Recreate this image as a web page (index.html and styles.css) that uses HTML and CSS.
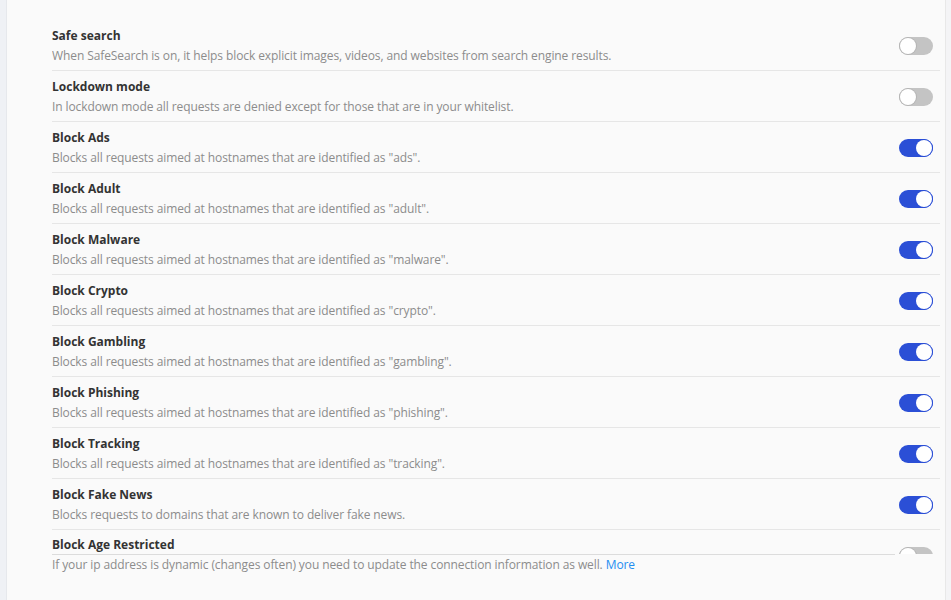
FILE: index.html
```html
<!DOCTYPE html>
<html lang="en">
<head>
    <meta charset="UTF-8">
    <meta name="viewport" content="width=device-width, initial-scale=1.0">
    <title>Filtering settings</title>
    <link rel="stylesheet" href="styles.css">
</head>
<body>
    <div class="page">
        <div class="side"></div>

        <div class="main">
            <div class="settings">
                <div class="setting">
                    <div class="text">
                        <div class="name">Safe search</div>
                        <div class="desc">When SafeSearch is on, it helps block explicit images, videos, and websites from search engine results.</div>
                    </div>
                    <label class="switch"><input type="checkbox"><span class="slider"></span></label>
                </div>

                <div class="setting">
                    <div class="text">
                        <div class="name">Lockdown mode</div>
                        <div class="desc">In lockdown mode all requests are denied except for those that are in your whitelist.</div>
                    </div>
                    <label class="switch"><input type="checkbox"><span class="slider"></span></label>
                </div>

                <div class="setting">
                    <div class="text">
                        <div class="name">Block Ads</div>
                        <div class="desc">Blocks all requests aimed at hostnames that are identified as "ads".</div>
                    </div>
                    <label class="switch"><input type="checkbox" checked><span class="slider"></span></label>
                </div>

                <div class="setting">
                    <div class="text">
                        <div class="name">Block Adult</div>
                        <div class="desc">Blocks all requests aimed at hostnames that are identified as "adult".</div>
                    </div>
                    <label class="switch"><input type="checkbox" checked><span class="slider"></span></label>
                </div>

                <div class="setting">
                    <div class="text">
                        <div class="name">Block Malware</div>
                        <div class="desc">Blocks all requests aimed at hostnames that are identified as "malware".</div>
                    </div>
                    <label class="switch"><input type="checkbox" checked><span class="slider"></span></label>
                </div>

                <div class="setting">
                    <div class="text">
                        <div class="name">Block Crypto</div>
                        <div class="desc">Blocks all requests aimed at hostnames that are identified as "crypto".</div>
                    </div>
                    <label class="switch"><input type="checkbox" checked><span class="slider"></span></label>
                </div>

                <div class="setting">
                    <div class="text">
                        <div class="name">Block Gambling</div>
                        <div class="desc">Blocks all requests aimed at hostnames that are identified as "gambling".</div>
                    </div>
                    <label class="switch"><input type="checkbox" checked><span class="slider"></span></label>
                </div>

                <div class="setting">
                    <div class="text">
                        <div class="name">Block Phishing</div>
                        <div class="desc">Blocks all requests aimed at hostnames that are identified as "phishing".</div>
                    </div>
                    <label class="switch"><input type="checkbox" checked><span class="slider"></span></label>
                </div>

                <div class="setting">
                    <div class="text">
                        <div class="name">Block Tracking</div>
                        <div class="desc">Blocks all requests aimed at hostnames that are identified as "tracking".</div>
                    </div>
                    <label class="switch"><input type="checkbox" checked><span class="slider"></span></label>
                </div>

                <div class="setting">
                    <div class="text">
                        <div class="name">Block Fake News</div>
                        <div class="desc">Blocks requests to domains that are known to deliver fake news.</div>
                    </div>
                    <label class="switch"><input type="checkbox" checked><span class="slider"></span></label>
                </div>

                <div class="setting">
                    <div class="text">
                        <div class="name">Block Age Restricted</div>
                    </div>
                    <label class="switch"><input type="checkbox"><span class="slider"></span></label>
                </div>
            </div>

            <p class="note">If your ip address is dynamic (changes often) you need to update the connection information as well. <a href="#">More</a></p>
        </div>

        <div class="edge"></div>
    </div>
</body>
</html>
```

FILE: styles.css
```css
* {
    box-sizing: border-box;
}

body {
    margin: 0;
    font-family: "Open Sans", Arial, sans-serif;
    background: #fafafa;
    color: #333;
}

.page {
    display: flex;
    height: 600px;
}

.side {
    width: 7px;
    background: #eff1f5;
    border-right: 1px solid #e6e8ec;
}

.edge {
    width: 6px;
    background: #f4f4f6;
    border-left: 1px solid #e8e8e8;
}

.main {
    flex: 1;
    padding: 20px 0 0 45px;
}

.settings {
    height: 534px;
    margin-right: 5px;
    overflow: hidden;
}

.setting {
    display: flex;
    align-items: center;
    height: 51px;
    padding: 5px 0 4px;
    border-bottom: 1px solid #e6e6e6;
}

.setting:last-child {
    align-items: flex-start;
}

.text {
    flex: 1;
}

.name {
    font-size: 12px;
    font-weight: 700;
    color: #333;
    line-height: 20px;
}

.desc {
    font-size: 12px;
    letter-spacing: -0.1px;
    color: #8c8c8c;
    line-height: 20px;
}

.switch {
    position: relative;
    width: 34px;
    height: 18px;
    margin: 1px 7px 0 0;
}

.setting:last-child .switch {
    margin-top: 12px;
}

.switch input {
    display: none;
}

.slider {
    position: absolute;
    inset: 0;
    border-radius: 9px;
    background: #c4c4c4;
}

.slider::before {
    content: "";
    position: absolute;
    top: 1px;
    left: 1px;
    width: 16px;
    height: 16px;
    border-radius: 50%;
    background: #fff;
    box-shadow: 0 0 0 1px #b5b5b5;
}

.switch input:checked + .slider {
    background: #2b4fd6;
}

.switch input:checked + .slider::before {
    left: 17px;
    box-shadow: 0 0 0 1px #2b4fd6;
}

.note {
    margin: 0 50px 0 0;
    padding-top: 1px;
    border-top: 1px solid #dcdcdc;
    font-size: 12px;
    letter-spacing: -0.1px;
    line-height: 18px;
    color: #8c8c8c;
}

.note a {
    color: #1f8ef1;
    text-decoration: none;
}
```
